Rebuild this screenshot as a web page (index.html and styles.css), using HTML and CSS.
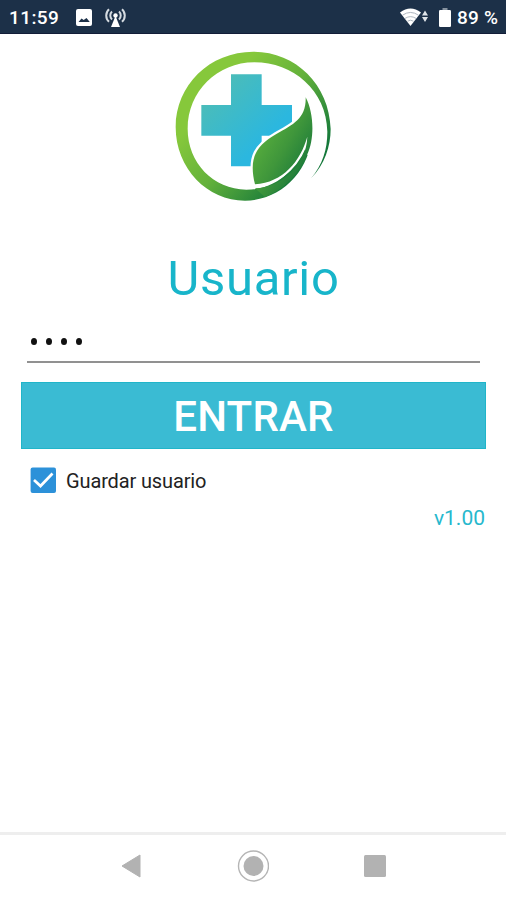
FILE: index.html
```html
<!DOCTYPE html>
<html lang="es">
<head>
<meta charset="utf-8">
<meta name="viewport" content="width=device-width, initial-scale=1">
<title>Usuario</title>
<link rel="stylesheet" href="styles.css">
</head>
<body>
<div class="screen">
  <header class="status">
    <span class="clock">11:59</span>
    <svg class="photo" width="16" height="17" viewBox="0 0 16 17"><rect width="16" height="17" rx="2" fill="#fff"/><path d="M2.500 13l3-3.500 2.200 1.500L10.500 9l3.300 4z" fill="#1c3048"/></svg>
    <svg class="antenna" width="21" height="20" viewBox="0 0 21 20"><g fill="none" stroke="#d5dbe1" stroke-width="2"><path d="M4 1.200C.3 4.500.3 10.500 4 13.800M7 3.500C4.700 5.600 4.700 9.400 7 11.500M17 1.200c3.700 3.300 3.700 9.300 0 12.600M14 3.500c2.300 2.100 2.300 5.900 0 8"/></g><circle cx="10.500" cy="7.500" r="2.200" fill="#fff"/><path d="M10.500 8L15 19H6z" fill="#fff"/></svg>
    <span class="spacer"></span>
    <svg class="wifi" width="28" height="19" viewBox="0 0 28 19"><path d="M0 4.500Q10.500-3.500 21 4.500L10.500 18z" fill="#fff"/><path d="M2.500 7.200q8-5.500 16 0M5 10.400q5.500-3.500 11 0M7.500 13.200q3-2 6 0" fill="none" stroke="#a5aeb8" stroke-width=".9"/><path d="M25 2.500l3 5h-6zM25 14l3-5h-6z" fill="#dfe4e9"/></svg>
    <svg class="battery" width="12" height="19" viewBox="0 0 12 19"><path d="M3.500 0h5v2h-5z" fill="#8793a0"/><rect y="2" width="12" height="17" rx="1.200" fill="#fff"/></svg>
    <span class="percent">89 %</span>
  </header>
  <main class="login">
    <svg class="logo" width="175" height="170" viewBox="0 0 525 510">
      <defs>
        <linearGradient id="ring" gradientUnits="userSpaceOnUse" x1="150" y1="170" x2="410" y2="400"><stop stop-color="#86c83b"/><stop offset=".45" stop-color="#63b13b"/><stop offset="1" stop-color="#14783a"/></linearGradient>
        <linearGradient id="cross" x1="0" y1="0" x2="1" y2="1"><stop offset=".1" stop-color="#4ebdb5"/><stop offset=".7" stop-color="#2bb7df"/></linearGradient>
        <linearGradient id="leaf" x1=".2" y1=".2" x2=".85" y2=".85"><stop stop-color="#5bb13d"/><stop offset=".5" stop-color="#3f963b"/><stop offset="1" stop-color="#16763a"/></linearGradient>
      </defs>
      <path d="M198 103H290V195H381V287H290V379H198V287H109V195H198Z" fill="url(#cross)"/>
      <path d="M438 415C479 374 497 318 497 267C493 132 391 35 265 35C133 35 32 136 32 261C32 386 127 482 240 482C348 482 436 393 441 280L427 290C407 381 337 449 244 449C145 447 68 369 68 266C68 155 157 67 268 67C384 67 485 151 487 275C487 329 473 373 438 415Z" fill="url(#ring)"/>
      <path d="M422 172C447 219 449 297 427 343L427 290C406 364 354 426 270 433C249 348 278 315 334 282C386 254 424 234 422 172Z" fill="#fff" stroke="#fff" stroke-width="14"/>
      <path d="M422 172C447 219 449 297 427 343C399 410 350 452 300 471L270 445C350 441 424 378 427 290C406 364 354 427 270 433C249 348 278 315 334 282C386 254 424 234 422 172Z" fill="url(#leaf)"/>
    </svg>
    <h1 class="title">Usuario</h1>
    <div class="password" aria-label="Usuario"><i></i><i></i><i></i><i></i></div>
    <button class="enter">ENTRAR</button>
    <div class="remember">
      <svg width="26" height="26" viewBox="0 0 26 26"><rect x=".6" y=".6" width="25.400" height="25.400" rx="2" fill="#2c91d9"/><path d="M4 13l6.500 6L22.500 6.500" fill="none" stroke="#fff" stroke-width="2.700"/></svg>
      <span>Guardar usuario</span>
    </div>
    <div class="version">v1.00</div>
  </main>
  <nav class="navigation">
    <svg width="20" height="24" viewBox="0 0 20 24"><path d="M1 12L19 1V23Z" fill="#b2b2b2" stroke="#b2b2b2" stroke-linejoin="round"/></svg>
    <svg width="32" height="32" viewBox="0 0 32 32"><circle cx="16.500" cy="16" r="15" fill="none" stroke="#b5b5b5" stroke-width="1.400"/><circle cx="16.500" cy="16" r="10" fill="#b2b2b2"/></svg>
    <svg width="22" height="22" viewBox="0 0 22 22"><rect width="22" height="22" rx="1.500" fill="#b2b2b2"/></svg>
  </nav>
</div>
</body>
</html>
```
FILE: styles.css
```css
* { box-sizing: border-box; }
body { margin: 0; background: #fff; font-family: Roboto, "Liberation Sans", sans-serif; }
svg { display: block; flex: none; }
.screen { width: 506px; height: 900px; display: flex; flex-direction: column; overflow: hidden; }
.status { height: 34px; flex: none; display: flex; align-items: center; padding: 2px 8px 0 9px; background: #1c3048; border-bottom: 1px solid #121d38; color: #fff; font-size: 19px; font-weight: 500; line-height: 32px; white-space: nowrap; }
.clock { width: 67px; letter-spacing: .4px; }
.antenna { margin-left: 13px; }
.spacer { flex: 1; }
.battery { margin: 0 6px 0 11px; }
.percent { width: 41px; letter-spacing: .2px; }
.login { flex: 1; display: flex; flex-direction: column; padding: 6px 20px 0 21px; }
.logo { margin-left: 144px; }
.title { width: 465px; height: 60px; margin: 39px 0 0; color: #18b5ca; font-size: 49px; font-weight: 400; line-height: 60px; letter-spacing: .7px; text-align: center; }
.password { height: 54px; margin: 0 6px; padding: 29px 0 0 4px; display: flex; gap: 9px; border-bottom: 2px solid #919191; }
.password i { width: 6px; height: 7px; border-radius: 50%; background: #111; }
.enter { height: 67px; margin: 19px 0 0; padding: 3px 0 0; border: 1px solid #20b5c9; background: #3abbd3; color: #fff; font: 500 42px/60px Roboto, "Liberation Sans", sans-serif; letter-spacing: .2px; text-align: center; }
.remember { height: 26px; margin: 18px 0 0 9px; display: flex; align-items: center; gap: 10px; color: #222; font-size: 20px; line-height: 26px; letter-spacing: -.13px; }
.remember span { padding-top: 1px; }
.version { margin-top: 13px; padding-right: 1px; color: #27b8cd; font-size: 21px; line-height: 24px; text-align: right; }
.navigation { height: 68px; flex: none; display: flex; align-items: center; gap: 96px; padding: 0 0 3px 121px; border-top: 3px solid #eee; }
.navigation svg:last-child { margin-left: -1px; }
```
